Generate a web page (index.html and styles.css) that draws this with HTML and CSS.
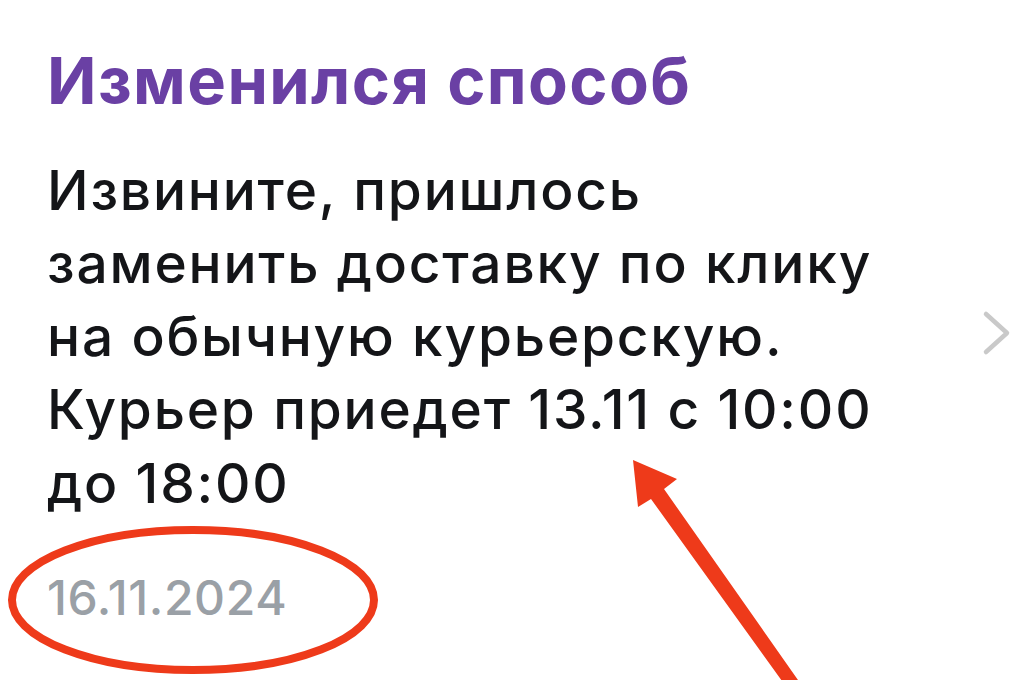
FILE: index.html
```html
<!DOCTYPE html>
<html lang="ru">
<head>
<meta charset="utf-8">
<link rel="stylesheet" href="styles.css">
</head>
<body>
<div class="card">
  <div class="content">
    <h1 class="title">Изменился способ</h1>
    <p class="message">Извините, пришлось<br>заменить доставку по клику<br>на обычную курьерскую.<br>Курьер приедет 13.11 с 10:00<br>до 18:00</p>
    <div class="date">16.11.2024</div>
  </div>
  <div class="chevron">
    <svg width="30" height="46" viewBox="0 0 30 46"><path d="M4 4 L25 23 L4 42" fill="none" stroke="#c9c9c9" stroke-width="4.5" stroke-linecap="round" stroke-linejoin="round"/></svg>
  </div>
</div>
<svg class="annotations" width="1017" height="680" viewBox="0 0 1017 680">
  <ellipse cx="193" cy="600" rx="181" ry="70" fill="none" stroke="#ee3a1a" stroke-width="8"/>
  <path d="M633 460 L677 479 L664 489 L812 700 L800 706 L651 499 L638 507 Z" fill="#ee3a1a"/>
</svg>
</body>
</html>
```
FILE: styles.css
```css
html, body {
  margin: 0;
  padding: 0;
  background: #ffffff;
}
body {
  width: 1017px;
  height: 680px;
  overflow: hidden;
  position: relative;
  font-family: "Inter", "Liberation Sans", sans-serif;
}
.card {
  display: flex;
  align-items: flex-start;
  padding: 0 5px 0 47px;
}
.content {
  flex: 1;
  padding-top: 37px;
}
.title {
  margin: 0;
  font-size: 65px;
  font-weight: 700;
  line-height: 88px;
  color: #6a40a4;
  letter-spacing: 1.4px;
}
.message {
  margin: 28.5px 0 0;
  font-size: 55px;
  line-height: 73.25px;
  color: #141518;
  font-weight: 500;
  letter-spacing: 1.8px;
}
.date {
  margin-top: 50px;
  font-size: 48px;
  line-height: 56px;
  color: #9aa0a6;
  font-weight: 500;
  letter-spacing: 0.6px;
}
.chevron {
  display: flex;
  margin-top: 310px;
}
.annotations {
  position: absolute;
  left: 0;
  top: 0;
  pointer-events: none;
}
```
